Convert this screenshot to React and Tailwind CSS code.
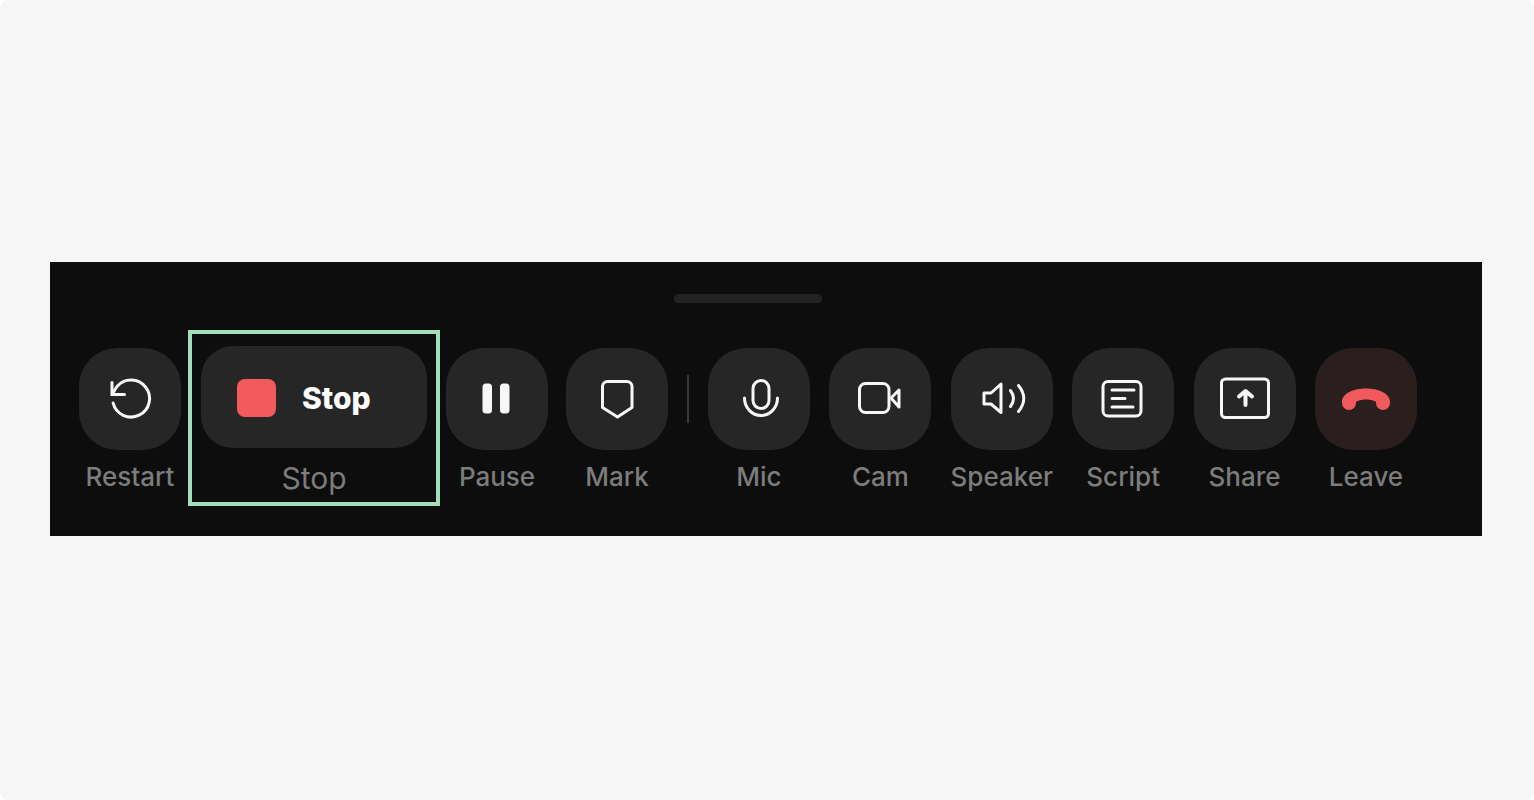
import React, { useState } from "react";

const icons = {
  restart: (
    <>
      <path d="M-16.9 4A18.5 18.5 0 1 0-13-12.5L-17.5-5.5" />
      <path d="M-18-16.5V-4.5H-5.5" strokeLinejoin="miter" />
    </>
  ),
  pause: (
    <g fill="currentColor" stroke="none">
      <rect x="-14.5" y="-15.5" width="9.5" height="30" rx="3.5" />
      <rect x="3" y="-15.5" width="9.5" height="30" rx="3.5" />
    </g>
  ),
  mark: <path d="M-9.5-17.5H10a5 5 0 0 1 5 5V8.5L.5 18-14.5 8.5V-12.5a5 5 0 0 1 5-5z" />,
  mic: (
    <>
      <rect x="-6" y="-18.5" width="16" height="28" rx="8" />
      <path d="M-14.5-1a16.5 17.5 0 0 0 33 0" />
    </>
  ),
  cam: (
    <>
      <rect x="-20.5" y="-15.5" width="29.5" height="29" rx="6" />
      <path d="M11-1 19-9V8z" />
    </>
  ),
  speaker: (
    <>
      <path d="M-18-6h7L-1-15V13.5L-11 5h-7z" />
      <path d="M8.5-8.5Q14.5-.5 8.5 7.5" />
      <path d="M16.5-13.5Q27-.5 16.5 12.5" />
    </>
  ),
  script: (
    <>
      <rect x="-20" y="-17.5" width="38" height="34.5" rx="5" />
      <path d="M-11-9H11M-11-.5H2M-11 8H10" />
    </>
  ),
  share: (
    <>
      <rect x="-23.5" y="-20" width="47" height="38.5" rx="4" />
      <path d="M.5 6V-7.5M-6-2.5 .5-8 7-2.5" strokeWidth="4" />
    </>
  ),
  leave: (
    <path
      fill="currentColor"
      stroke="none"
      d="M-24 3C-24-6-12-10.5 0-10.5S24-6 24 3v1a7 7 0 0 1-14 0c0-1.5 0-1.5-2-2C4 0-4 0-8 2c-2 .5-2 .5-2 2a7 7 0 0 1-14 0z"
    />
  ),
};

function Icon({ name }) {
  return (
    <svg
      viewBox="-30 -30 60 60"
      className="h-[60px] w-[60px]"
      fill="none"
      stroke="currentColor"
      strokeWidth="3"
      strokeLinecap="round"
      strokeLinejoin="round"
      aria-hidden="true"
    >
      {icons[name]}
    </svg>
  );
}

function Control({ icon, label, danger, active, onClick }) {
  return (
    <button
      type="button"
      aria-pressed={active}
      onClick={onClick}
      className="mt-[18px] flex w-[102px] shrink-0 cursor-pointer flex-col items-center gap-[11px]"
    >
      <span
        className={
          "flex h-[102px] w-full items-center justify-center rounded-[38px] " +
          (danger ? "bg-[#2a1e1e] text-[#f15a5c]" : "bg-[#262626] text-[#f7f7f7]")
        }
      >
        <Icon name={icon} />
      </span>
      <span className="text-[26px] leading-8 font-medium whitespace-nowrap text-[#7c7c7c]">{label}</span>
    </button>
  );
}

const devices = [
  { icon: "mic", label: "Mic" },
  { icon: "cam", label: "Cam" },
  { icon: "speaker", label: "Speaker" },
  { icon: "script", label: "Script" },
  { icon: "share", label: "Share" },
  { icon: "leave", label: "Leave", danger: true },
];

function App() {
  const [paused, setPaused] = useState(false);

  return (
    <div className="bg-white font-['Inter',sans-serif]">
      <main className="flex min-h-screen items-center rounded-lg bg-[#f6f6f6] pr-[52px] pb-[2px] pl-[50px]">
        <section aria-label="Recording controls" className="flex-1 bg-[#0d0d0d] pt-8 pb-[30px]">
          {/* Drag handle */}
          <div className="flex justify-center pr-9">
            <div className="h-[9px] w-[148px] rounded-sm bg-[#222222]" />
          </div>

          <div className="mt-[27px] flex items-start gap-[18px] pr-[65px] pl-[29px]">
            <Control icon="restart" label="Restart" />

            {/* Highlighted stop control */}
            <button
              type="button"
              className="-mr-3 -ml-[11px] flex h-[176px] w-[252px] shrink-0 cursor-pointer flex-col items-center gap-3 border-4 border-[#a0dfb9] pt-3"
            >
              <span className="flex h-[102px] w-[226px] items-center gap-[26px] rounded-[32px] bg-[#262626] pt-[2px] pl-9">
                <span className="h-[38px] w-[39px] rounded-lg bg-[#f35a5b]" />
                <span className="text-[30px] leading-9 font-extrabold text-white">Stop</span>
              </span>
              <span className="text-[30px] leading-9 text-[#7c7c7c]">Stop</span>
            </button>

            <Control
              icon="pause"
              label="Pause"
              active={paused}
              onClick={() => setPaused((prev) => !prev)}
            />
            <Control icon="mark" label="Mark" />

            <div className="mx-px mt-[45px] h-12 w-[2px] shrink-0 bg-[#383838]" />

            <div className="flex flex-1 justify-between">
              {devices.map((d) => (
                <Control key={d.label} {...d} />
              ))}
            </div>
          </div>
        </section>
      </main>
    </div>
  );
}

export default App;
